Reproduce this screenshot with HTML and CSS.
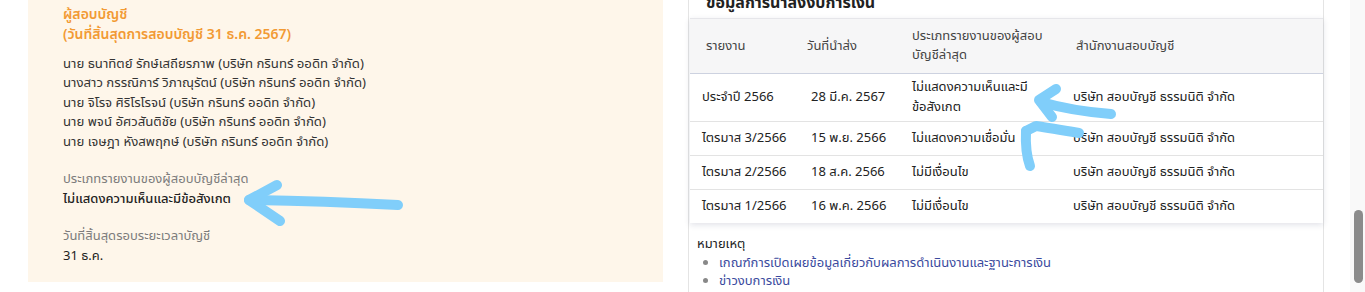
FILE: index.html
```html
<!DOCTYPE html>
<html lang="th">
<head>
  <meta charset="UTF-8" />
  <title>ข้อมูลผู้สอบบัญชี</title>
  <link rel="stylesheet" href="styles.css">
</head>
<body>
  <div class="page">
    <!-- ผู้สอบบัญชี -->
    <div class="auditor-panel">
      <div class="panel-title">
        ผู้สอบบัญชี<br>
        (วันที่สิ้นสุดการสอบบัญชี 31 ธ.ค. 2567)
      </div>
      <ul class="auditor-list">
        <li>นาย ธนาทิตย์ รักษ์เสถียรภาพ (บริษัท กรินทร์ ออดิท จำกัด)</li>
        <li>นางสาว กรรณิการ์ วิภาณุรัตน์ (บริษัท กรินทร์ ออดิท จำกัด)</li>
        <li>นาย จิโรจ ศิริโรโรจน์ (บริษัท กรินทร์ ออดิท จำกัด)</li>
        <li>นาย พจน์ อัศวสันติชัย (บริษัท กรินทร์ ออดิท จำกัด)</li>
        <li>นาย เจษฎา หังสพฤกษ์ (บริษัท กรินทร์ ออดิท จำกัด)</li>
      </ul>

      <div class="field">
        <div class="field-label">ประเภทรายงานของผู้สอบบัญชีล่าสุด</div>
        <div class="field-value">ไม่แสดงความเห็นและมีข้อสังเกต</div>
      </div>

      <div class="field">
        <div class="field-label">วันที่สิ้นสุดรอบระยะเวลาบัญชี</div>
        <div class="field-value plain">31 ธ.ค.</div>
      </div>
    </div>

    <!-- ข้อมูลการนำส่งงบการเงิน -->
    <div class="fs-card">
      <h3>ข้อมูลการนำส่งงบการเงิน</h3>
      <table class="fs-table">
        <colgroup>
          <col class="c1"><col class="c2"><col class="c3"><col class="c4">
        </colgroup>
        <thead>
          <tr>
            <th>รายงาน</th>
            <th>วันที่นำส่ง</th>
            <th>ประเภทรายงานของผู้สอบ<br>บัญชีล่าสุด</th>
            <th>สำนักงานสอบบัญชี</th>
          </tr>
        </thead>
        <tbody>
          <tr>
            <td>ประจำปี 2566</td>
            <td>28 มี.ค. 2567</td>
            <td>ไม่แสดงความเห็นและมี<br>ข้อสังเกต</td>
            <td>บริษัท สอบบัญชี ธรรมนิติ จำกัด</td>
          </tr>
          <tr>
            <td>ไตรมาส 3/2566</td>
            <td>15 พ.ย. 2566</td>
            <td>ไม่แสดงความเชื่อมั่น</td>
            <td>บริษัท สอบบัญชี ธรรมนิติ จำกัด</td>
          </tr>
          <tr>
            <td>ไตรมาส 2/2566</td>
            <td>18 ส.ค. 2566</td>
            <td>ไม่มีเงื่อนไข</td>
            <td>บริษัท สอบบัญชี ธรรมนิติ จำกัด</td>
          </tr>
          <tr>
            <td>ไตรมาส 1/2566</td>
            <td>16 พ.ค. 2566</td>
            <td>ไม่มีเงื่อนไข</td>
            <td>บริษัท สอบบัญชี ธรรมนิติ จำกัด</td>
          </tr>
        </tbody>
      </table>

      <div class="notes">
        <div class="notes-title">หมายเหตุ</div>
        <ul>
          <li><a href="#">เกณฑ์การเปิดเผยข้อมูลเกี่ยวกับผลการดำเนินงานและฐานะการเงิน</a></li>
          <li><a href="#">ข่าวงบการเงิน</a></li>
        </ul>
      </div>
    </div>

    <div class="scrollbar"><div class="thumb"></div></div>
  </div>

  <!-- ลูกศรที่วาดทับ -->
  <svg class="marks" width="1365" height="292" viewBox="0 0 1365 292">
    <g fill="none" stroke="#80cefa" stroke-width="10" stroke-linecap="round" stroke-linejoin="round">
      <path d="M398 205 Q320 201 249 200" />
      <path d="M277 185 L249 200 L280 221" />
      <path d="M1111 114 Q1072 111 1041 102" />
      <path d="M1056 89 L1039 100 L1052 117" />
      <path d="M1079 133 Q1050 128 1036 126 L1026 131" />
      <path d="M1026 131 Q1025 152 1030 166" />
    </g>
  </svg>
</body>
</html>
```

FILE: styles.css
```css
* {
  box-sizing: border-box;
}

body {
  margin: 0;
  font-family: 'Noto Sans Thai', 'Noto Sans', sans-serif;
  font-size: 13px;
  color: #333;
  background: #fff;
  overflow: hidden;
}

.page {
  display: flex;
  align-items: flex-start;
  height: 292px;
}

/* ผู้สอบบัญชี */
.auditor-panel {
  width: 635px;
  margin-left: 28px;
  height: 282px;
  background: #fef6ea;
  padding: 5px 35px 0;
}

.panel-title {
  color: #f29a34;
  font-size: 14px;
  font-weight: 600;
  line-height: 20px;
}

.auditor-list {
  list-style: none;
  margin: 10px 0 0;
  padding: 0;
  font-size: 13.2px;
  line-height: 19.4px;
}

.field {
  margin-top: 17px;
  line-height: 20px;
}

.field-label {
  color: #7c7c7c;
}

.field-value {
  color: #222;
  font-weight: 500;
}

.field-value.plain {
  font-weight: normal;
}

/* งบการเงิน */
.fs-card {
  width: 636px;
  margin-left: 25px;
  height: 292px;
  border-left: 1px solid #e4e4e4;
  border-right: 1px solid #e4e4e4;
  padding-left: 1px;
}

.fs-card h3 {
  margin: -8px 0 0;
  padding-left: 16px;
  font-size: 16px;
  line-height: 22px;
  color: #222;
}

.fs-table {
  width: 633px;
  margin-top: 4px;
  border-collapse: collapse;
  box-shadow: 0 2px 6px rgba(40, 50, 90, 0.14);
  border-top: 1px solid #e6e6ea;
}

.fs-table col.c1 { width: 109px; }
.fs-table col.c2 { width: 101px; }
.fs-table col.c3 { width: 161px; }
.fs-table col.c4 { width: 262px; }

.fs-table th {
  background: #f6f6f7;
  font-weight: normal;
  text-align: left;
  color: #444;
  line-height: 19px;
  padding: 8px 8px 8px 12px;
  border-bottom: 1px solid #cdd2e0;
}

.fs-table th:nth-child(1) { padding-left: 16px; }
.fs-table th:nth-child(2) { padding-left: 8px; }
.fs-table th:nth-child(4) { padding-left: 15px; }

.fs-table td {
  padding: 6px 8px 7px 12px;
  line-height: 20px;
  border-bottom: 1px solid #e3e3e3;
  color: #222;
}

.fs-table tbody tr:last-child td {
  border-bottom: none;
}

.fs-table tbody tr:first-child td {
  padding-top: 3px;
  padding-bottom: 4px;
}

.notes {
  padding: 12px 0 0 7px;
  line-height: 18px;
}

.notes-title {
  color: #222;
}

.notes ul {
  margin: 1px 0 0;
  padding-left: 22px;
  color: #888;
  font-size: 13px;
}

.notes a {
  color: #3a4a9e;
  text-decoration: none;
}

.scrollbar {
  margin-left: auto;
  width: 15px;
  height: 292px;
  background: #f9f9f9;
  padding: 210px 2px 0 4px;
}

.thumb {
  width: 9px;
  height: 73px;
  border-radius: 5px;
  background: #8b8b8b;
}

.marks {
  position: absolute;
  top: 0;
  left: 0;
  pointer-events: none;
}
```
